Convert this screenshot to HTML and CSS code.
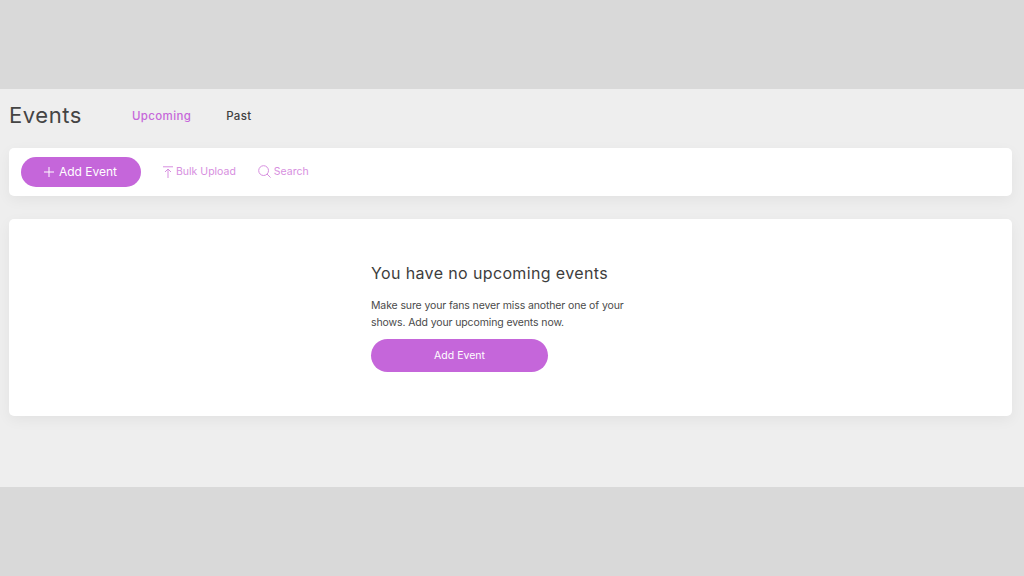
FILE: index.html
```html
<!DOCTYPE html>
<html lang="en">
<head>
<meta charset="utf-8">
<title>Events</title>
<link rel="stylesheet" href="styles.css">
</head>
<body>
<main class="page">
  <header class="head">
    <h1 class="title">Events</h1>
    <nav class="tabs">
      <a class="tab tab-active">Upcoming</a>
      <a class="tab">Past</a>
    </nav>
  </header>
  <section class="toolbar card">
    <button class="btn btn-add"><svg class="ico-plus" width="10" height="10" viewBox="0 0 10 10"><path d="M5 0v10M0 5h10" stroke="#fff" stroke-width="1" fill="none"/></svg>Add Event</button>
    <a class="tool tool-bulk"><svg width="10" height="12" viewBox="0 0 10 12"><path d="M0 .8h10M5 12V3M2 6l3-3 3 3" stroke="#d78fe0" stroke-width="1" fill="none"/></svg>Bulk Upload</a>
    <a class="tool"><svg width="13" height="13" viewBox="0 0 13 13"><circle cx="5.6" cy="5.6" r="4.9" stroke="#d78fe0" stroke-width="1" fill="none"/><path d="M9 9l3.6 3.6" stroke="#d78fe0" stroke-width="1" fill="none"/></svg>Search</a>
  </section>
  <section class="empty card">
    <div class="empty-body">
      <h2 class="empty-title">You have no upcoming events</h2>
      <p class="empty-text">Make sure your fans never miss another one of your shows. Add your upcoming events now.</p>
      <button class="btn btn-wide">Add Event</button>
    </div>
  </section>
</main>
</body>
</html>
```
FILE: styles.css
```css
* { box-sizing: border-box; }
html, body { margin: 0; height: 100%; }
body {
  background: #d9d9d9;
  padding-top: 89px;
  font-family: "Inter", "Liberation Sans", sans-serif;
  color: #3d3d3d;
  overflow: hidden;
}
.page {
  height: 398px;
  background: #eeeeee;
  padding: 0 12px 0 9px;
}
.head {
  height: 59px;
  padding-bottom: 7px;
  display: flex;
  align-items: center;
}
.title {
  margin: 0;
  width: 123px;
  font-size: 22px;
  font-weight: 400;
  letter-spacing: 0.55px;
  color: #444;
}
.tabs { display: flex; gap: 35px; margin-top: 2px; }
.tab {
  font-size: 11.5px;
  font-weight: 500;
  letter-spacing: 0.35px;
  color: #3f3f3f;
}
.tab-active { color: #c667da; }
.card {
  background: #fff;
  border-radius: 5px;
  box-shadow: 0 4px 14px rgba(0, 0, 0, 0.05);
}
.toolbar {
  height: 48px;
  display: flex;
  align-items: center;
  padding: 0 0 1px 12px;
  margin-bottom: 23px;
}
.btn {
  border: 0;
  background: #c566da;
  color: #fff;
  font-family: inherit;
  display: flex;
  align-items: center;
  justify-content: center;
}
.btn-add {
  width: 120px;
  height: 30px;
  border-radius: 15px;
  font-size: 12px;
  gap: 5px;
  padding-right: 7px;
  margin-right: 22px;
}
.tool {
  display: flex;
  align-items: center;
  gap: 3px;
  font-size: 10.5px;
  color: #d78fe0;
}
.tool-bulk { margin-right: 22px; }
.empty {
  height: 197px;
  padding: 43px 0 0 362px;
}
.empty-body { width: 262px; }
.empty-title {
  margin: 0 0 13px;
  font-size: 16px;
  line-height: 22px;
  font-weight: 400;
  letter-spacing: 0.37px;
  color: #3d3d3d;
}
.empty-text {
  margin: 0 0 8px;
  font-size: 10.5px;
  line-height: 17px;
  letter-spacing: -0.12px;
  color: #4a4a4a;
}
.btn-wide {
  width: 177px;
  height: 33px;
  border-radius: 17px;
  font-size: 10.5px;
}
```
